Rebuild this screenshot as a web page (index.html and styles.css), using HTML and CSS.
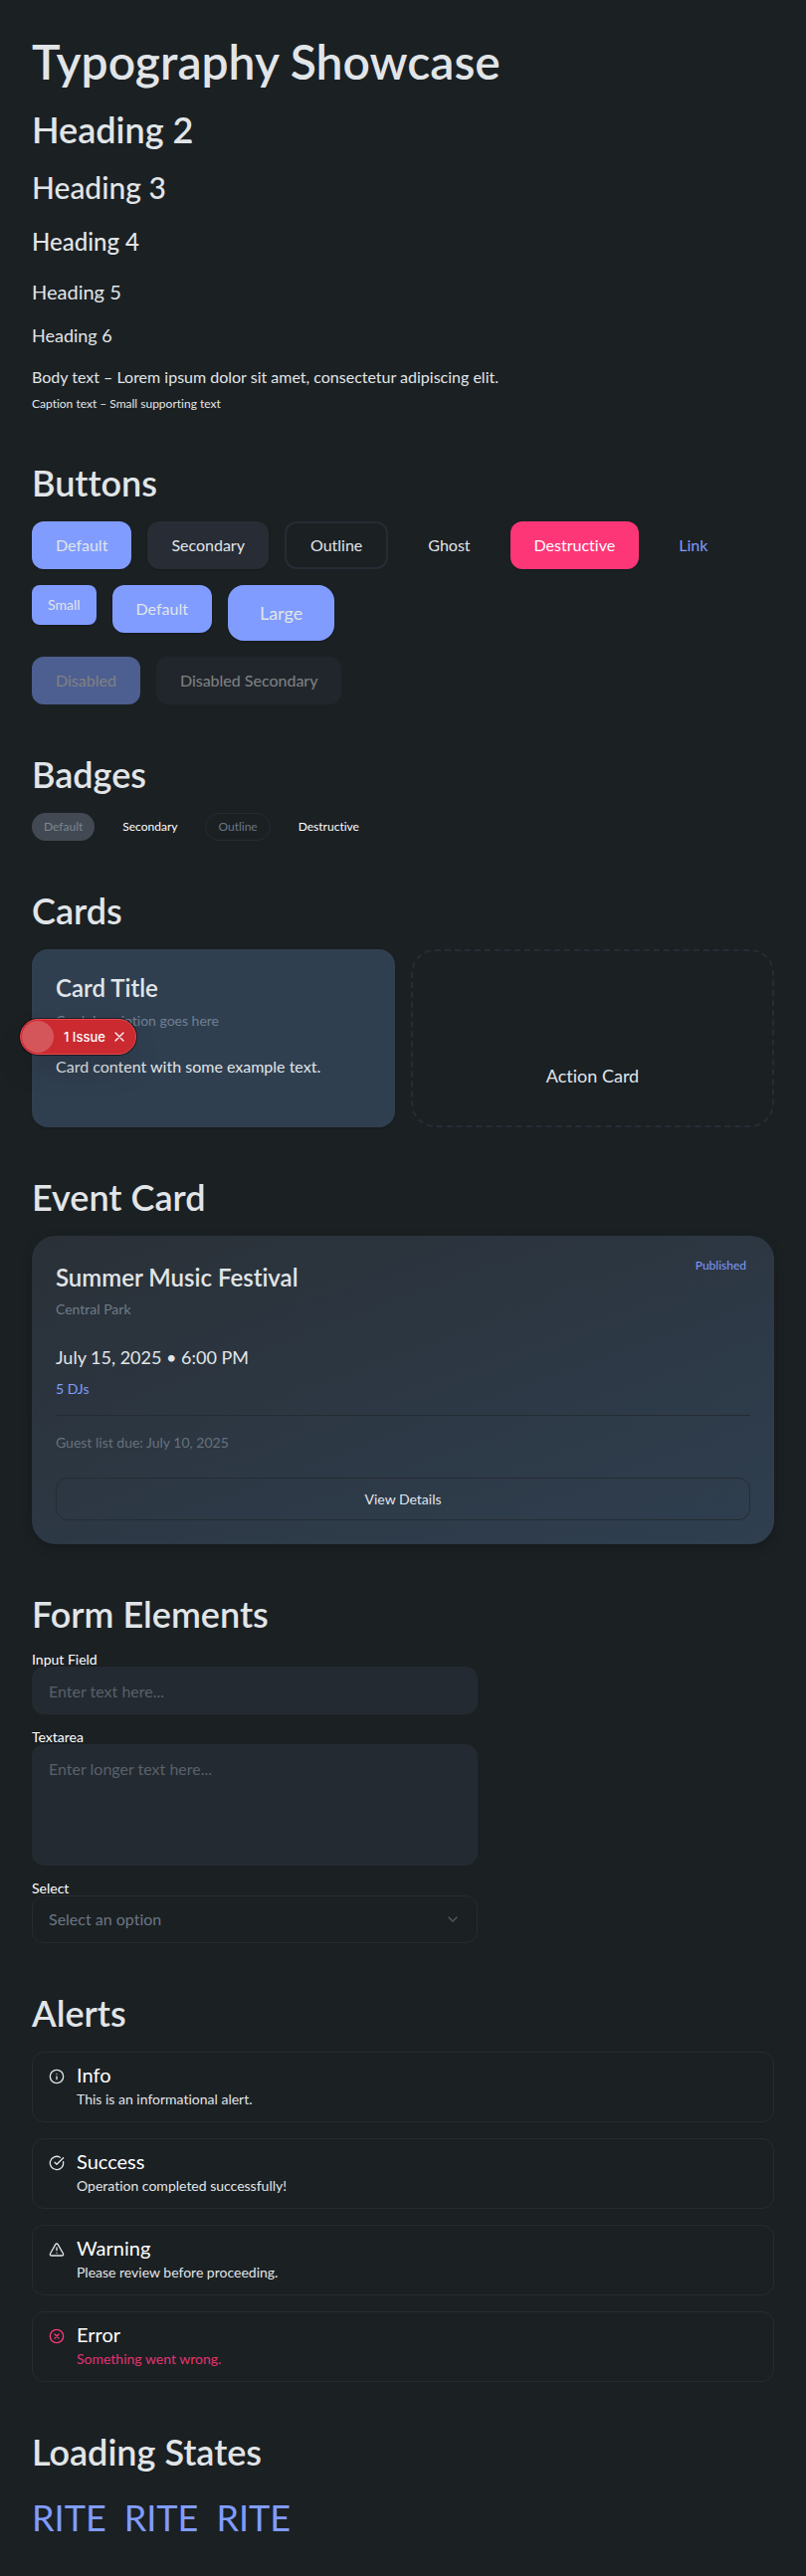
FILE: index.html
```html
<!DOCTYPE html>
<html lang="en">
<head>
<meta charset="utf-8">
<meta name="viewport" content="width=device-width, initial-scale=1">
<title>Typography Showcase</title>
<link rel="stylesheet" href="styles.css">
</head>
<body>
<main class="page">
  <section class="type-samples">
    <h1 class="h1">Typography Showcase</h1>
    <h2 class="h2">Heading 2</h2>
    <h3 class="h3">Heading 3</h3>
    <h4 class="h4">Heading 4</h4>
    <h5 class="h5">Heading 5</h5>
    <h6 class="h6">Heading 6</h6>
    <div class="copy">
      <p class="body-text">Body text – Lorem ipsum dolor sit amet, consectetur adipiscing elit.</p>
      <p class="caption">Caption text – Small supporting text</p>
    </div>
  </section>

  <section class="section">
    <h2 class="h2">Buttons</h2>
    <div class="stack">
      <div class="row">
        <button class="btn primary" type="button">Default</button>
        <button class="btn secondary" type="button">Secondary</button>
        <button class="btn outline" type="button">Outline</button>
        <button class="btn ghost" type="button">Ghost</button>
        <button class="btn destructive" type="button">Destructive</button>
        <button class="btn link" type="button">Link</button>
      </div>
      <div class="row">
        <button class="btn primary small" type="button">Small</button>
        <button class="btn primary" type="button">Default</button>
        <button class="btn primary large" type="button">Large</button>
      </div>
      <div class="row">
        <button class="btn primary" type="button" disabled>Disabled</button>
        <button class="btn secondary" type="button" disabled>Disabled Secondary</button>
      </div>
    </div>
  </section>

  <section class="section">
    <h2 class="h2">Badges</h2>
    <div class="row">
      <span class="badge badge-default">Default</span>
      <span class="badge">Secondary</span>
      <span class="badge badge-outline">Outline</span>
      <span class="badge">Destructive</span>
    </div>
  </section>

  <section class="section">
    <h2 class="h2">Cards</h2>
    <div class="cards">
      <article class="card">
        <h3 class="card-title">Card Title</h3>
        <p class="card-description">Card description goes here</p>
        <p class="card-content">Card content with some example text.</p>
      </article>
      <article class="action-card">Action Card</article>
    </div>
  </section>

  <section class="section">
    <h2 class="h2">Event Card</h2>
    <article class="event">
      <header class="event-head">
        <h3 class="event-title">Summer Music Festival</h3>
        <span class="event-status">Published</span>
      </header>
      <p class="event-venue">Central Park</p>
      <p class="event-date">July 15, 2025 • 6:00 PM</p>
      <p class="event-djs">5 DJs</p>
      <p class="event-due">Guest list due: July 10, 2025</p>
      <button class="event-button" type="button">View Details</button>
    </article>
  </section>

  <section class="section">
    <h2 class="h2">Form Elements</h2>
    <form class="form">
      <div class="field">
        <label for="text-field">Input Field</label>
        <input class="control" id="text-field" type="text" placeholder="Enter text here...">
      </div>
      <div class="field">
        <label for="long-field">Textarea</label>
        <textarea class="control area" id="long-field" placeholder="Enter longer text here..."></textarea>
      </div>
      <div class="field">
        <label for="choice">Select</label>
        <div class="select-wrap">
          <select class="control select" id="choice">
            <option>Select an option</option>
          </select>
          <svg class="chevron" viewBox="0 0 24 24" aria-hidden="true"><path d="m6 9 6 6 6-6"/></svg>
        </div>
      </div>
    </form>
  </section>

  <section class="section">
    <h2 class="h2">Alerts</h2>
    <div class="stack">
      <div class="alert" role="status">
        <svg class="icon" viewBox="0 0 24 24" aria-hidden="true"><circle cx="12" cy="12" r="10"/><path d="M12 16v-4M12 8h.01"/></svg>
        <div>
          <h3 class="alert-title">Info</h3>
          <p class="alert-text">This is an informational alert.</p>
        </div>
      </div>
      <div class="alert" role="status">
        <svg class="icon" viewBox="0 0 24 24" aria-hidden="true"><path d="M21.801 10A10 10 0 1 1 17 3.335"/><path d="m9 11 3 3L22 4"/></svg>
        <div>
          <h3 class="alert-title">Success</h3>
          <p class="alert-text">Operation completed successfully!</p>
        </div>
      </div>
      <div class="alert" role="status">
        <svg class="icon" viewBox="0 0 24 24" aria-hidden="true"><path d="m21.73 18-8-14a2 2 0 0 0-3.48 0l-8 14A2 2 0 0 0 4 21h16a2 2 0 0 0 1.73-3"/><path d="M12 9v4M12 17h.01"/></svg>
        <div>
          <h3 class="alert-title">Warning</h3>
          <p class="alert-text">Please review before proceeding.</p>
        </div>
      </div>
      <div class="alert alert-error" role="alert">
        <svg class="icon" viewBox="0 0 24 24" aria-hidden="true"><circle cx="12" cy="12" r="10"/><path d="m15 9-6 6M9 9l6 6"/></svg>
        <div>
          <h3 class="alert-title">Error</h3>
          <p class="alert-text">Something went wrong.</p>
        </div>
      </div>
    </div>
  </section>

  <section class="section">
    <h2 class="h2">Loading States</h2>
    <div class="loaders">
      <span>RITE</span>
      <span>RITE</span>
      <span>RITE</span>
    </div>
  </section>
</main>

<aside class="issue">
  <span class="issue-mark"></span>
  <span class="issue-label">1 Issue</span>
  <button class="issue-close" type="button" aria-label="Close">
    <svg viewBox="0 0 10 10" aria-hidden="true"><path d="m1 1 8 8M9 1 1 9"/></svg>
  </button>
</aside>
</body>
</html>
```

FILE: styles.css
```css
:root {
  --bg: #1b2023;
  --text: #e1e5e8;
  --muted: #6b7683;
  --primary: #809cff;
  --secondary: #272c35;
  --danger: #fd3777;
  --border: #272c33;
}

* { box-sizing: border-box; }

body {
  position: relative;
  margin: 0;
  background: var(--bg);
  color: var(--text);
  font: 400 16px/24px Lato, "Liberation Sans", sans-serif;
  font-variant-ligatures: none;
}

h1, h2, h3, h4, h5, h6, p { margin: 0; }

button, input, textarea, select { font: inherit; color: inherit; }

.page {
  display: flex;
  flex-direction: column;
  gap: 48px;
  padding: 32px;
}

.type-samples, .section, .stack {
  display: flex;
  flex-direction: column;
  gap: 16px;
}

.h1 { font-size: 48px; line-height: 60px; font-weight: 600; }
.h2 { font-size: 36px; line-height: 45px; font-weight: 600; }
.h3 { font-size: 30px; line-height: 38px; font-weight: 500; }
.h4 { font-size: 24px; line-height: 40px; font-weight: 500; }
.h5 { font-size: 20px; line-height: 28px; font-weight: 400; }
.h6 { font-size: 18px; line-height: 28px; font-weight: 400; }
.copy { display: grid; gap: 6px; }
.caption { font-size: 12px; line-height: 18px; }

.row {
  display: flex;
  flex-wrap: wrap;
  align-items: flex-start;
  gap: 16px;
}

.btn {
  height: 48px;
  padding: 0 24px;
  border: 0;
  border-radius: 12px;
  background: transparent;
}
.primary { background: var(--primary); box-shadow: 0 1px 2px rgba(0, 0, 0, .2); }
.secondary { background: var(--secondary); box-shadow: 0 1px 2px rgba(0, 0, 0, .2); }
.outline { border: 2px solid var(--secondary); }
.destructive { background: var(--danger); color: #fff; box-shadow: 0 1px 2px rgba(0, 0, 0, .2); }
.link { color: var(--primary); }
.small { height: 40px; padding: 0 16px; border-radius: 8px; font-size: 14px; }
.large { height: 56px; padding: 0 32px; border-radius: 16px; font-size: 18px; }
.btn:disabled { color: #e1e1e1; opacity: .5; box-shadow: none; }

.badge {
  padding: 5px 12px;
  border-radius: 14px;
  color: #fff;
  font-size: 12px;
  line-height: 18px;
}
.badge-default { background: #434952; color: #7b8794; }
.badge-outline { border: 1px solid var(--border); padding: 4px 12px; color: #6b7683; }

.cards {
  display: grid;
  grid-template-columns: 1fr 1fr;
  gap: 16px;
}
.card {
  padding: 24px 24px 48px;
  border-radius: 16px;
  background: #303f50;
  box-shadow: 0 1px 3px rgba(0, 0, 0, .2);
}
.card-title { font-size: 24px; line-height: 30px; font-weight: 600; }
.card-description { margin-top: 8px; color: #6f7f8f; font-size: 14px; line-height: 20px; }
.card-content { margin-top: 24px; }
.action-card {
  padding: 111px 24px 36px;
  border: 2px dashed var(--secondary);
  border-radius: 24px;
  font-size: 18px;
  line-height: 28px;
  text-align: center;
}

.event {
  display: flex;
  flex-direction: column;
  padding: 24px;
  border-radius: 24px;
  background: linear-gradient(160deg, #2a3037, #2f3f50);
  box-shadow: 0 4px 12px rgba(0, 0, 0, .2);
}
.event-head { display: flex; justify-content: space-between; align-items: flex-start; }
.event-title { font-size: 24px; line-height: 36px; font-weight: 600; }
.event-status { padding: 0 4px; color: var(--primary); font-size: 12px; line-height: 12px; }
.event-venue { margin-top: 4px; color: #6f7b88; font-size: 14px; line-height: 20px; }
.event-date { margin-top: 24px; font-size: 18px; line-height: 28px; }
.event-djs { margin-top: 8px; color: var(--primary); font-size: 14px; line-height: 20px; }
.event-due {
  margin-top: 16px;
  padding-top: 16px;
  border-top: 1px solid #252c33;
  color: #67717c;
  font-size: 14px;
  line-height: 22px;
}
.event-button {
  height: 43px;
  margin-top: 24px;
  border: 1px solid #252c33;
  border-radius: 12px;
  background: transparent;
  font-size: 14px;
}

.form {
  display: flex;
  flex-direction: column;
  gap: 16px;
  max-width: 448px;
}
.field { display: flex; flex-direction: column; }
.field label { color: #fff; font-size: 14px; line-height: 14px; }
.control {
  display: block;
  width: 100%;
  height: 48px;
  margin: 0;
  padding: 0 16px;
  border: 1px solid #262b31;
  border-radius: 12px;
  background: #242a31;
}
.control::placeholder { color: #58616b; opacity: 1; }
.area { height: 122px; padding: 12px 16px; resize: none; }
.select-wrap { position: relative; }
.select { appearance: none; background: transparent; border-color: var(--border); color: #6b7683; }
.chevron {
  position: absolute;
  top: 16px;
  right: 17px;
  width: 16px;
  height: 16px;
  fill: none;
  stroke: #515a64;
  stroke-width: 2;
  stroke-linecap: round;
  stroke-linejoin: round;
  pointer-events: none;
}

.alert {
  display: flex;
  gap: 12px;
  padding: 12px 16px;
  border: 1px solid var(--border);
  border-radius: 12px;
}
.icon {
  flex: none;
  width: 16px;
  height: 16px;
  margin-top: 4px;
  fill: none;
  stroke: currentColor;
  stroke-width: 2;
  stroke-linecap: round;
  stroke-linejoin: round;
}
.alert-title { color: #fff; font-size: 20px; line-height: 20px; font-weight: 400; }
.alert-text { margin-top: 4px; font-size: 14px; line-height: 21px; }
.alert-error { color: var(--danger); }
.alert-error .alert-text { color: #e43370; }

.loaders {
  display: flex;
  gap: 18px;
  color: var(--primary);
  font-size: 36px;
  line-height: 54px;
}

.issue {
  position: absolute;
  top: 1024px;
  left: 20px;
  display: flex;
  align-items: center;
  height: 36px;
  padding: 0 6px 0 1px;
  border: 1px solid #e5484d;
  border-radius: 18px;
  background: #ca2a30;
  box-shadow: 0 0 0 1px rgba(0, 0, 0, .5), 0 16px 32px -8px rgba(0, 0, 0, .25);
  color: #fff;
  font: 500 13px/16px Inter, "Liberation Sans", sans-serif;
}
.issue-mark { width: 32px; height: 32px; margin-right: 10px; border-radius: 50%; background: #d4565b; }
.issue-close { display: grid; place-items: center; width: 20px; height: 20px; margin-left: 4px; padding: 0; border: 0; background: transparent; }
.issue-close svg { width: 10px; height: 10px; fill: none; stroke: #fff; stroke-width: 1.3; stroke-linecap: round; }
```
